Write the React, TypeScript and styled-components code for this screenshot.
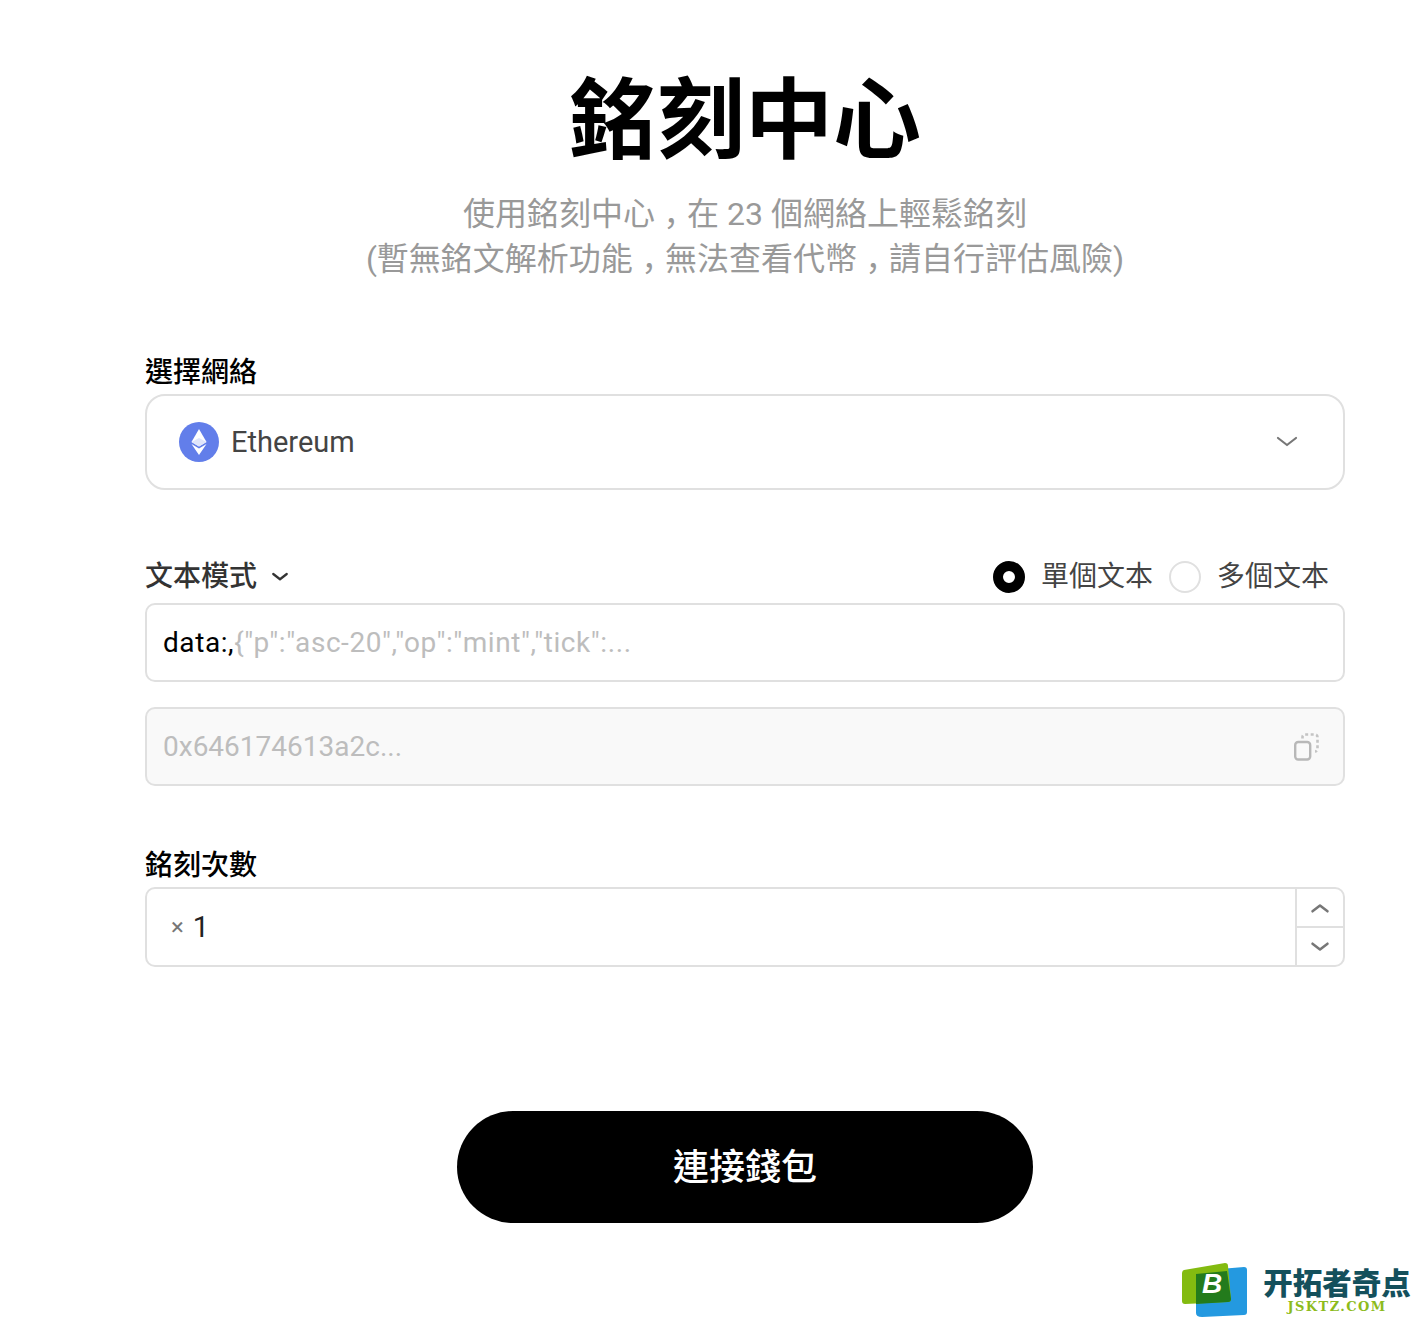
import React from 'react'
import styled, { createGlobalStyle } from 'styled-components'

const GlobalStyle = createGlobalStyle`
  html, body {
    margin: 0;
    padding: 0;
    background: #fff;
  }
  body {
    font-family: Roboto, 'Noto Sans CJK TC', sans-serif;
  }
`

const Page = styled.div`
  position: relative;
  width: 1422px;
  height: 1320px;
  overflow: hidden;
  box-sizing: border-box;
  padding: 65px 77px 0 145px;
`

const Title = styled.h1`
  margin: 0;
  font-size: 88px;
  line-height: 112px;
  font-weight: 700;
  color: #000;
  text-align: center;
`

const Subtitle = styled.p`
  margin: 15px 0 0;
  font-size: 32px;
  line-height: 44.5px;
  color: #999;
  text-align: center;
`

const Comma = styled.span`
  line-height: 0;
  vertical-align: -10px;
`

const Label = styled.div<{ $muted?: boolean }>`
  font-size: 28px;
  line-height: 36px;
  font-weight: 500;
  color: ${({ $muted }) => ($muted ? '#333' : '#000')};
`

const Section = styled.section<{ $top: number }>`
  margin-top: ${({ $top }) => $top}px;
  display: flex;
  flex-direction: column;
`

const SelectBox = styled.div`
  box-sizing: border-box;
  height: 96px;
  margin-top: 3px;
  padding: 0 44px 0 32px;
  display: flex;
  align-items: center;
  border: 2px solid #e0e0e0;
  border-radius: 20px;
`

const SelectValue = styled.span`
  margin-left: 12px;
  flex: 1;
  font-size: 29px;
  color: #444;
`

const ModeRow = styled.div`
  display: flex;
  align-items: center;
  justify-content: space-between;
  height: 36px;
`

const ModeLabel = styled.div`
  display: flex;
  align-items: center;
  gap: 14px;
`

const RadioGroup = styled.div`
  display: flex;
  align-items: center;
  padding-right: 16px;
`

const Radio = styled.span<{ $checked?: boolean }>`
  box-sizing: border-box;
  width: 32px;
  height: 32px;
  border-radius: 50%;
  background: #fff;
  border: ${({ $checked }) => ($checked ? '10px solid #000' : '2px solid #e0e0e0')};
`

const RadioText = styled.span`
  margin-left: 16px;
  font-size: 28px;
  line-height: 36px;
  color: #444;
  & + ${Radio} {
    margin-left: 16px;
  }
`

const InputBox = styled.div<{ $disabled?: boolean; $top: number }>`
  box-sizing: border-box;
  height: 79px;
  margin-top: ${({ $top }) => $top}px;
  padding: 0 24px 0 16px;
  display: flex;
  align-items: center;
  justify-content: space-between;
  border: 2px solid #e0e0e0;
  border-radius: 10px;
  background: ${({ $disabled }) => ($disabled ? '#f9f9f9' : '#fff')};
  font-size: 28px;
`

const DataText = styled.span`
  letter-spacing: 0.57px;
`

const Value = styled.span`
  color: #000;
`

const Placeholder = styled.span`
  color: #bdbdbd;
`

const Stepper = styled.div`
  box-sizing: border-box;
  height: 80px;
  margin-top: 3px;
  display: flex;
  border: 2px solid #e0e0e0;
  border-radius: 10px;
`

const StepperValue = styled.div`
  flex: 1;
  display: flex;
  align-items: center;
  padding-left: 24px;
  font-size: 29px;
  color: #222;
`

const Times = styled.span`
  margin-right: 9px;
  font-size: 24px;
  color: #777;
`

const StepperButtons = styled.div`
  width: 46px;
  display: flex;
  flex-direction: column;
  border-left: 2px solid #e0e0e0;
`

const StepperButton = styled.div`
  flex: 1;
  display: flex;
  align-items: center;
  justify-content: center;
  & + & {
    border-top: 2px solid #e0e0e0;
  }
`

const ConnectButton = styled.button`
  display: block;
  width: 576px;
  height: 112px;
  margin: 144px auto 0;
  padding: 0 0 7px;
  border: 0;
  border-radius: 56px;
  background: #000;
  color: #fff;
  font-family: inherit;
  font-size: 36px;
  font-weight: 500;
`

const Watermark = styled.div`
  position: absolute;
  left: 1182px;
  top: 1263px;
  display: flex;
  gap: 14px;
`

const BrandText = styled.div`
  display: flex;
  flex-direction: column;
  align-items: center;
  width: 150px;
`

const BrandName = styled.div`
  margin-top: 3px;
  font-family: 'Noto Sans CJK SC', sans-serif;
  font-size: 29.5px;
  line-height: 30px;
  font-weight: 900;
  color: #14505c;
  white-space: nowrap;
`

const BrandUrl = styled.div`
  margin-top: 4px;
  font-family: 'DejaVu Serif', serif;
  font-size: 13px;
  line-height: 14px;
  font-weight: 700;
  letter-spacing: 1.4px;
  color: #8dbb1c;
`

const Chevron = ({ up, size = 24, color = '#777', weight = 2.2 }: { up?: boolean; size?: number; color?: string; weight?: number }) => (
  <svg width={size} height={size} viewBox="0 0 24 24" fill="none" stroke={color} strokeWidth={weight} strokeLinecap="round" strokeLinejoin="round">
    <path d={up ? 'M3 16l9-7 9 7' : 'M3 8l9 7 9-7'} />
  </svg>
)

const EthIcon = () => (
  <svg width="40" height="40" viewBox="0 0 40 40">
    <circle cx="20" cy="20" r="20" fill="#627eea" />
    <path d="M20 7 L27.500 20 L20 24.600 L12.500 20 Z" fill="#fff" />
    <path d="M20 26.600 L27.500 22 L20 33 L12.500 22 Z" fill="#fff" />
    <path d="M20 16 L27.500 20 L20 24.600 L12.500 20 Z" fill="#dfe5fb" />
  </svg>
)

const CopyIcon = () => (
  <svg width="25" height="28" viewBox="0 0 25 28" fill="none" strokeWidth="2.4">
    <rect x="1.200" y="9" width="15" height="17.500" rx="3" stroke="#b8b8b8" />
    <path d="M8.500 5.500V4A2.500 2.500 0 0 1 11 1.500H21A2.500 2.500 0 0 1 23.500 4V16A2.500 2.500 0 0 1 21 18.500" stroke="#c4c4c4" strokeWidth="2.600" strokeDasharray="3 2.500" />
  </svg>
)

const BrandLogo = () => (
  <svg width="66" height="54" viewBox="0 0 66 54">
    <path d="M14 8 L62 4 Q65 4 65 7 L65 49 Q65 52 62 52 L20 54 Q14 54 14 50 Z" fill="#2499e0" />
    <path d="M2 7 L43 0 Q46 0 46 3 L49 36 Q49 39 46 39 L3 41 Q0 41 0 38 L0 10 Q0 8 2 7 Z" fill="#83bb10" />
    <path d="M14 11 L45 8 L49 36 Q49 39 46 39 L14 41 Z" fill="#237b1c" />
    <text x="20" y="30" fontFamily="'Liberation Sans', sans-serif" fontSize="28" fontWeight="700" fontStyle="italic" fill="#fff">B</text>
  </svg>
)

export default function App() {
  return (
    <Page>
      <GlobalStyle />
      <Title>銘刻中心</Title>
      <Subtitle>
        使用銘刻中心<Comma>，</Comma>在 23 個網絡上輕鬆銘刻
        <br />
        (暫無銘文解析功能<Comma>，</Comma>無法查看代幣<Comma>，</Comma>請自行評估風險)
      </Subtitle>

      <Section $top={74}>
        <Label>選擇網絡</Label>
        <SelectBox>
          <EthIcon />
          <SelectValue>Ethereum</SelectValue>
          <Chevron />
        </SelectBox>
      </Section>

      <Section $top={69}>
        <ModeRow>
          <ModeLabel>
            <Label $muted>文本模式</Label>
            <Chevron size={18} color="#333" weight={3} />
          </ModeLabel>
          <RadioGroup>
            <Radio $checked />
            <RadioText>單個文本</RadioText>
            <Radio />
            <RadioText>多個文本</RadioText>
          </RadioGroup>
        </ModeRow>
        <InputBox $top={8}>
          <DataText>
            <Value>data:,</Value>
            <Placeholder>{'{"p":"asc-20","op":"mint","tick":...'}</Placeholder>
          </DataText>
        </InputBox>
        <InputBox $disabled $top={25}>
          <Placeholder>0x646174613a2c...</Placeholder>
          <CopyIcon />
        </InputBox>
      </Section>

      <Section $top={62}>
        <Label>銘刻次數</Label>
        <Stepper>
          <StepperValue>
            <Times>×</Times>1
          </StepperValue>
          <StepperButtons>
            <StepperButton>
              <Chevron up size={20} weight={3} />
            </StepperButton>
            <StepperButton>
              <Chevron size={20} weight={3} />
            </StepperButton>
          </StepperButtons>
        </Stepper>
      </Section>

      <ConnectButton>連接錢包</ConnectButton>

      <Watermark>
        <BrandLogo />
        <BrandText>
          <BrandName>开拓者奇点</BrandName>
          <BrandUrl>JSKTZ.COM</BrandUrl>
        </BrandText>
      </Watermark>
    </Page>
  )
}
